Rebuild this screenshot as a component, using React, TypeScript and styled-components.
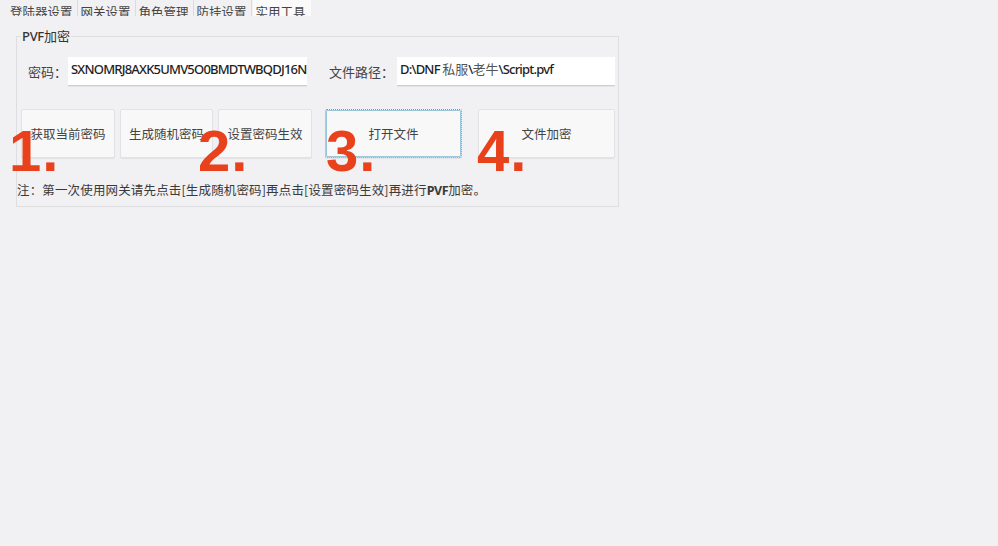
import React from "react";
import styled, { createGlobalStyle } from "styled-components";

const GlobalStyle = createGlobalStyle`
  html, body {
    margin: 0;
    padding: 0;
    background: #f1f0f2;
  }
  body {
    width: 998px;
    height: 546px;
    overflow: hidden;
    font-family: "Noto Sans CJK SC", "Noto Sans", sans-serif;
    color: #3a3a3a;
  }
`;

const Page = styled.div`
  width: 998px;
  height: 546px;
  background: #f1f0f2;
`;

const TabBar = styled.div`
  display: flex;
  height: 16px;
  overflow: hidden;
  padding-left: 7px;
`;

const Tab = styled.div<{ $active?: boolean }>`
  height: 16px;
  padding: 0 4px 0 3px;
  box-sizing: border-box;
  border-right: 1px solid ${(p) => (p.$active ? "transparent" : "#dcdcdc")};
  background: ${(p) => (p.$active ? "#fafafa" : "transparent")};
  font-size: 12.5px;
  line-height: 13px;
  color: #444;
  white-space: nowrap;
  display: flex;
  align-items: flex-end;
  margin-left: ${(p) => (p.$active ? "1px" : "0")};
`;

const TabText = styled.span`
  display: block;
  transform: translateY(2px);
`;

const Group = styled.fieldset`
  position: relative;
  margin: 12px 0 0 16px;
  width: 603px;
  height: 179px;
  box-sizing: border-box;
  padding: 0;
  border: 1px solid #dedde0;
  min-width: 0;
`;

const Legend = styled.legend`
  margin-left: 4px;
  padding: 0 1px;
  font-size: 13px;
  line-height: 16px;
  color: #333;
`;

const LegendLatin = styled.span`
  font-family: "Noto Sans", sans-serif;
  font-weight: 500;
  letter-spacing: -0.3px;
`;

const FieldRow = styled.div`
  display: flex;
  align-items: center;
  height: 29px;
  margin-top: 13px;
  padding-left: 11px;
`;

const Label = styled.span<{ $w: number }>`
  width: ${(p) => p.$w}px;
  font-size: 13px;
  color: #444;
  white-space: nowrap;
`;

const Input = styled.div<{ $w: number; $gapRight?: number }>`
  width: ${(p) => p.$w}px;
  height: 29px;
  box-sizing: border-box;
  background: #ffffff;
  border-bottom: 1px solid #cfcfd2;
  box-shadow: 0 1px 0 #e4e4e6;
  margin-right: ${(p) => p.$gapRight ?? 0}px;
  padding: 3px 2px 0 3px;
  font-family: "Noto Sans", sans-serif;
  font-size: 13px;
  line-height: 18px;
  letter-spacing: -0.8px;
  color: #1e1e1e;
  font-weight: 500;
  white-space: nowrap;
  overflow: hidden;
`;

const CjkPart = styled.span`
  font-family: "Noto Sans CJK SC", sans-serif;
  font-weight: 400;
  color: #555;
  letter-spacing: 0;
`;

const ButtonRow = styled.div`
  display: flex;
  margin-top: 23px;
  padding-left: 4px;
`;

const Button = styled.div<{ $w: number; $ml: number; $focused?: boolean }>`
  width: ${(p) => p.$w}px;
  height: 49px;
  margin-left: ${(p) => p.$ml}px;
  box-sizing: border-box;
  background: #f8f8f9;
  border: 1px ${(p) => (p.$focused ? "dotted #5b9fc2" : "solid #e2e2e4")};
  outline: ${(p) => (p.$focused ? "1px solid #9cc6dc" : "none")};
  outline-offset: -2px;
  border-radius: 2px;
  box-shadow: 0 1px 1px rgba(0, 0, 0, 0.06);
  display: flex;
  align-items: center;
  justify-content: center;
  font-size: 12.5px;
  color: #444;
  white-space: nowrap;
`;

const Note = styled.div`
  margin-top: 24px;
  font-size: 12.5px;
  line-height: 16px;
  letter-spacing: 0.15px;
  color: #3a3a3a;
  white-space: nowrap;
`;

const NoteLatin = styled.span`
  font-family: "Noto Sans", sans-serif;
  font-weight: 700;
  letter-spacing: -0.4px;
`;

const StepMark = styled.span<{ $x: number }>`
  position: absolute;
  left: ${(p) => p.$x}px;
  top: 72px;
  font-family: "Liberation Sans", Arial, sans-serif;
  font-weight: 700;
  font-size: 58px;
  line-height: 70px;
  letter-spacing: 1px;
  color: #e9411c;
  pointer-events: none;
`;

const tabs = ["登陆器设置", "网关设置", "角色管理", "防挂设置", "实用工具"];

const buttons = [
  { label: "获取当前密码", w: 94, ml: 0 },
  { label: "生成随机密码", w: 93, ml: 5 },
  { label: "设置密码生效", w: 94, ml: 5 },
  { label: "打开文件", w: 137, ml: 13, focused: true },
  { label: "文件加密", w: 137, ml: 16 },
];

const marks = [
  { n: "1.", x: -8 },
  { n: "2.", x: 181 },
  { n: "3.", x: 309 },
  { n: "4.", x: 460 },
];

export default function App() {
  return (
    <Page>
      <GlobalStyle />
      <TabBar>
        {tabs.map((t, i) => (
          <Tab key={t} $active={i === tabs.length - 1}>
            <TabText>{t}</TabText>
          </Tab>
        ))}
      </TabBar>
      <Group>
        <Legend>
          <LegendLatin>PVF</LegendLatin>加密
        </Legend>
        <FieldRow>
          <Label $w={40}>密码：</Label>
          <Input $w={239} $gapRight={22}>
            SXNOMRJ8AXK5UMV5O0BMDTWBQDJ16N
          </Input>
          <Label $w={68}>文件路径：</Label>
          <Input $w={218}>
            D:\DNF <CjkPart>私服</CjkPart>\<CjkPart>老牛</CjkPart>\Script.pvf
          </Input>
        </FieldRow>
        <ButtonRow>
          {buttons.map((b) => (
            <Button key={b.label} $w={b.w} $ml={b.ml} $focused={b.focused}>
              {b.label}
            </Button>
          ))}
        </ButtonRow>
        <Note>
          注：第一次使用网关请先点击[生成随机密码]再点击[设置密码生效]再进行<NoteLatin>PVF</NoteLatin>加密。
        </Note>
        {marks.map((m) => (
          <StepMark key={m.n} $x={m.x}>
            {m.n}
          </StepMark>
        ))}
      </Group>
    </Page>
  );
}
